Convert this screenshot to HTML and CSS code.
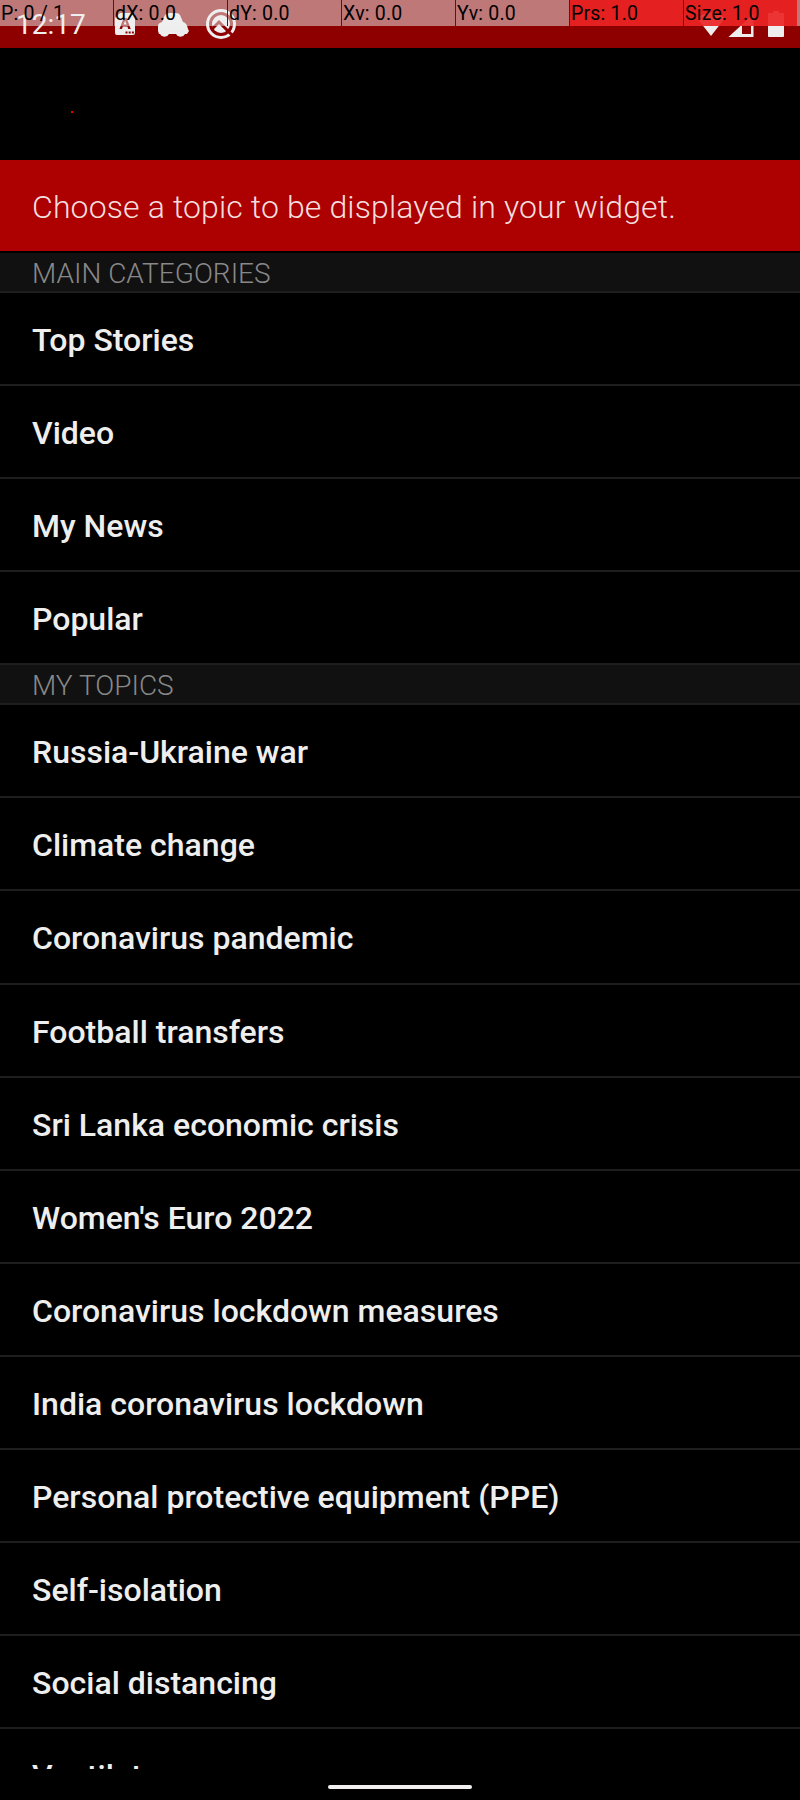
FILE: index.html
```html
<!DOCTYPE html>
<html lang="en">
<head>
<meta charset="utf-8">
<title>Widget topic</title>
<link rel="stylesheet" href="styles.css">
</head>
<body>
<div class="screen">
  <header class="status">
    <span class="clock">12:17</span>
    <svg class="status-icons" width="800" height="48" viewBox="0 0 800 48">
      <g fill="#eee">
        <path fill-rule="evenodd" d="M120 13h13q2 0 2 2v18q0 2-2 2h-16q-2 0-2-2V18zM123.500 18l-4 11h2.500l.8-2.500h4.600l.8 2.500h2.500l-4-11zM125.100 20.500l1.500 4h-3zM125.500 31.500v2h2v-2zM128.700 31.500v2h2v-2zM131.900 31.500v2h2v-2z"/>
        <path d="M158 31v-5q0-3 4-4l3-7q1-2 4-2h7q3 0 4 2l3 7q4 1 5 7l1 2-2 3h-2a5 5 0 0 1-9 0h-7a5 5 0 0 1-9 0h-1z"/>
        <path d="M697 18q14-11 28 0L711 36z"/>
        <path fill-rule="evenodd" d="M753.500 14v23H728.500zM742 25.500v8.500h9v-8.500z"/>
        <path d="M773 11h6v2h4q1 0 1 1v22q0 1-1 1h-14q-1 0-1-1V14q0-1 1-1h4z"/>
        <circle cx="221" cy="24" r="9"/>
      </g>
      <circle cx="221" cy="24" r="13.500" fill="none" stroke="#eee" stroke-width="3"/>
      <path d="M212 29l7-7 14 14" fill="none" stroke="#8e0000" stroke-width="3"/>
    </svg>
    <div class="pointer-bar">
      <span>P: 0 / 1</span><span>dX: 0.0</span><span>dY: 0.0</span><span>Xv: 0.0</span><span>Yv: 0.0</span><span class="hot">Prs: 1.0</span><span class="hot">Size: 1.0</span>
    </div>
  </header>
  <div class="app-bar"><i class="dot"></i></div>
  <h1 class="prompt">Choose a topic to be displayed in your widget.</h1>
  <main class="list">
    <h2 class="section">MAIN CATEGORIES</h2>
    <div class="row">Top Stories</div>
    <div class="row">Video</div>
    <div class="row">My News</div>
    <div class="row">Popular</div>
    <h2 class="section">MY TOPICS</h2>
    <div class="row">Russia-Ukraine war</div>
    <div class="row">Climate change</div>
    <div class="row tall">Coronavirus pandemic</div>
    <div class="row">Football transfers</div>
    <div class="row">Sri Lanka economic crisis</div>
    <div class="row">Women's Euro 2022</div>
    <div class="row">Coronavirus lockdown measures</div>
    <div class="row">India coronavirus lockdown</div>
    <div class="row">Personal protective equipment (PPE)</div>
    <div class="row">Self-isolation</div>
    <div class="row">Social distancing</div>
    <div class="row">Ventilators</div>
  </main>
  <footer class="nav"><div class="handle"></div></footer>
</div>
</body>
</html>
```
FILE: styles.css
```css
* { box-sizing: border-box; }
body { margin: 0; background: #000; font-family: Roboto, "Noto Sans", sans-serif; }
.screen { width: 800px; height: 1800px; display: flex; flex-direction: column; overflow: hidden; }
.status { position: relative; flex: none; height: 48px; background: #8e0000; padding: 9px 0 0 16px; }
.clock { font-size: 28px; line-height: 32px; color: #eee; }
.status-icons { position: absolute; left: 0; top: 0; }
.pointer-bar { position: absolute; inset: 0 0 auto 0; height: 26px; display: flex; background: rgba(239, 239, 239, .5); }
.pointer-bar span { width: 114px; flex: none; border-left: 1px solid #8e0000; padding-left: 1px; font-size: 19.5px; letter-spacing: .2px; line-height: 28px; height: 26px; color: #000; white-space: nowrap; }
.pointer-bar span:first-child { width: 113px; border-left: 0; }
.pointer-bar .hot { background: rgba(235, 15, 15, .84); }
.app-bar { flex: none; height: 112px; padding: 63px 0 0 71px; }
.dot { display: block; width: 2px; height: 2px; background: #e00; }
.prompt { flex: none; margin: 0; height: 91px; padding-left: 32px; background: #ad0000; color: #f3dede; font-size: 32px; font-weight: 300; letter-spacing: .13px; line-height: 94px; }
.list { flex: 1; min-height: 0; overflow: hidden; padding-top: 2px; }
.section { margin: 0; height: 40px; padding-left: 32px; background: #111; border-bottom: 2px solid #1e1e1e; color: #888; font-size: 28px; font-weight: 300; line-height: 41px; }
.row { height: 93px; padding-left: 32px; border-bottom: 2px solid #1e1e1e; color: #eee; font-size: 32px; font-weight: 500; line-height: 94px; }
.row.tall { height: 94px; }
.nav { flex: none; height: 31px; padding-top: 16px; }
.handle { width: 144px; height: 4px; margin: 0 auto; border-radius: 2px; background: #f1eff0; }
```
